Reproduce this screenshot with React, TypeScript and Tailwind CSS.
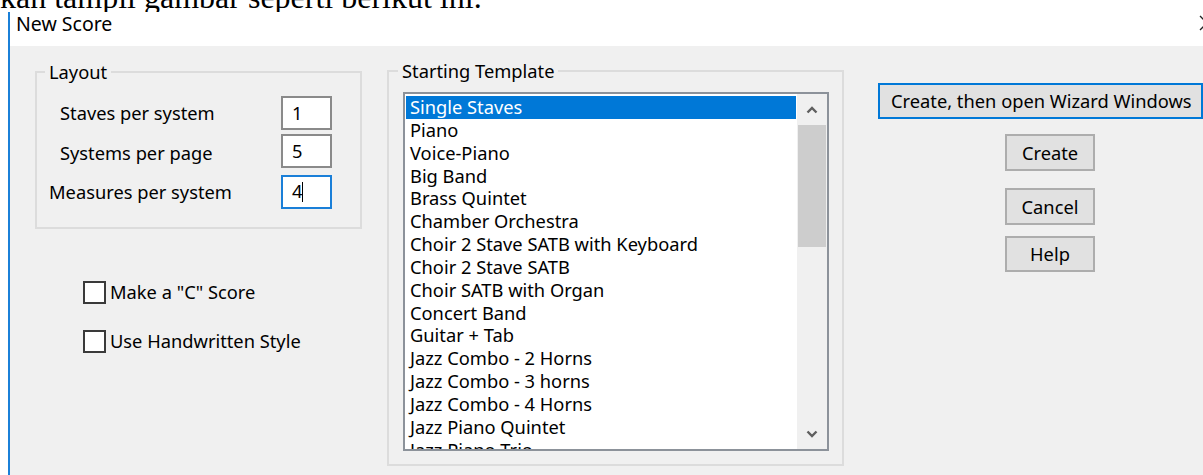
import React from "react";

const templates = [
  "Single Staves",
  "Piano",
  "Voice-Piano",
  "Big Band",
  "Brass Quintet",
  "Chamber Orchestra",
  "Choir 2 Stave SATB with Keyboard",
  "Choir 2 Stave SATB",
  "Choir SATB with Organ",
  "Concert Band",
  "Guitar + Tab",
  "Jazz Combo - 2 Horns",
  "Jazz Combo - 3 horns",
  "Jazz Combo - 4 Horns",
  "Jazz Piano Quintet",
  "Jazz Piano Trio",
];

const ui = "font-['Noto_Sans',sans-serif] text-[18.3px] text-black";

function NumberField({ value, focused }: { value: string; focused?: boolean }) {
  return (
    <div
      className={`w-[51px] h-[34px] bg-white border-2 flex items-center pl-[9px] ${
        focused ? "border-[#1a7fd8]" : "border-[#8a8a8a]"
      }`}
    >
      <span className="leading-none">{value}</span>
      {focused && <span className="inline-block w-[1px] h-[20px] bg-black" />}
    </div>
  );
}

function CheckBox({ label }: { label: string }) {
  return (
    <div className="flex items-center h-[23px] ml-[48px]">
      <div className="w-[23px] h-[23px] bg-white border-2 border-[#3a3a3a]" />
      <span className="ml-[4px] leading-none">{label}</span>
    </div>
  );
}

function Chevron({ down }: { down?: boolean }) {
  return (
    <svg width="12" height="8" viewBox="0 0 12 8" className="block">
      <path
        d={down ? "M1.5 1.5 L6 6 L10.5 1.5" : "M1.5 6.5 L6 2 L10.5 6.5"}
        fill="none"
        stroke="#5f5f5f"
        strokeWidth="2.4"
      />
    </svg>
  );
}

export default function App() {
  return (
    <div className="w-[1203px] h-[475px] overflow-hidden bg-white relative flex flex-col">
      {/* caption line of the surrounding document, clipped by the dialog */}
      <div className="h-[12px] overflow-hidden shrink-0">
        <p className="font-['Liberation_Serif',serif] text-[32px] leading-[30px] mt-[-18px] whitespace-nowrap text-black">
          kan tampil gambar seperti berikut ini.
        </p>
      </div>

      {/* dialog window */}
      <div className={`ml-[8px] border-l-2 border-[#1b80d8] flex-1 flex flex-col ${ui}`}>
        {/* title bar */}
        <div className="h-[34px] bg-white flex items-start pt-[2px] pl-[6px] relative shrink-0">
          <span className="leading-none text-[19.5px]">New Score</span>
          <svg
            width="16"
            height="16"
            viewBox="0 0 16 16"
            className="absolute left-[1189px] top-[3px]"
          >
            <path d="M1 1 L15 15 M15 1 L1 15" stroke="#222" strokeWidth="1.3" />
          </svg>
        </div>

        {/* dialog body */}
        <div className="flex-1 bg-[#f0f0f0] flex pl-[25px]">
          {/* left column */}
          <div className="w-[328px] flex flex-col">
            <fieldset className="mt-[16px] border-2 border-[#dcdcdc] pt-[14px] pb-[18px] px-0">
              <legend className="ml-[8px] px-[4px] leading-[20px]">Layout</legend>
              <div className="flex items-center h-[34px] pl-[23px] pr-[28px]">
                <span>Staves per system</span>
                <div className="ml-auto">
                  <NumberField value="1" />
                </div>
              </div>
              <div className="flex items-center h-[34px] mt-[4px] pl-[23px] pr-[28px]">
                <span className="mt-[4px]">Systems per page</span>
                <div className="ml-auto">
                  <NumberField value="5" />
                </div>
              </div>
              <div className="flex items-center h-[35px] mt-[6px] pl-[12px] pr-[28px]">
                <span>Measures per system</span>
                <div className="ml-auto">
                  <NumberField value="4" focused />
                </div>
              </div>
            </fieldset>

            <div className="mt-[52px] flex flex-col gap-[26px]">
              <CheckBox label={'Make a "C" Score'} />
              <CheckBox label="Use Handwritten Style" />
            </div>
          </div>

          {/* starting template */}
          <fieldset className="ml-[25px] mt-[15px] w-[457px] h-[405px] border-2 border-[#dcdcdc] pt-[11px] pl-0 pr-[13px] pb-[13px]">
            <legend className="ml-[9px] px-[4px] leading-[20px]">Starting Template</legend>
            <div className="ml-[14px] w-[426px] h-[359px] border-2 border-[#8c929a] bg-white flex overflow-hidden">
              <ul className="flex-1 pt-[2px] overflow-hidden">
                {templates.map((t, i) => (
                  <li
                    key={t}
                    className={`h-[22.85px] leading-[22.85px] pl-[4px] mx-[1px] whitespace-nowrap ${
                      i === 0 ? "bg-[#0078d7] text-white" : ""
                    }`}
                  >
                    {t}
                  </li>
                ))}
              </ul>
              <div className="w-[30px] bg-[#f0f0f0] flex flex-col">
                <div className="h-[31px] flex items-center justify-center">
                  <Chevron />
                </div>
                <div className="h-[122px] mx-[1px] bg-[#cdcdcd]" />
                <div className="flex-1" />
                <div className="h-[30px] flex items-center justify-center">
                  <Chevron down />
                </div>
              </div>
            </div>
          </fieldset>

          {/* action buttons */}
          <div className="ml-[34px] flex flex-col">
            <button className="mt-[37px] w-[325px] h-[36px] bg-[#e1e1e1] border-2 border-[#0078d7] flex items-center pl-[11px] whitespace-nowrap">
              Create, then open Wizard Windows
            </button>
            <button className="mt-[15px] ml-[127px] w-[90px] h-[37px] bg-[#e1e1e1] border-2 border-[#adadad]">
              Create
            </button>
            <button className="mt-[17px] ml-[127px] w-[90px] h-[37px] bg-[#e1e1e1] border-2 border-[#adadad]">
              Cancel
            </button>
            <button className="mt-[11px] ml-[127px] w-[90px] h-[36px] bg-[#e1e1e1] border-2 border-[#adadad]">
              Help
            </button>
          </div>
        </div>
      </div>
    </div>
  );
}
